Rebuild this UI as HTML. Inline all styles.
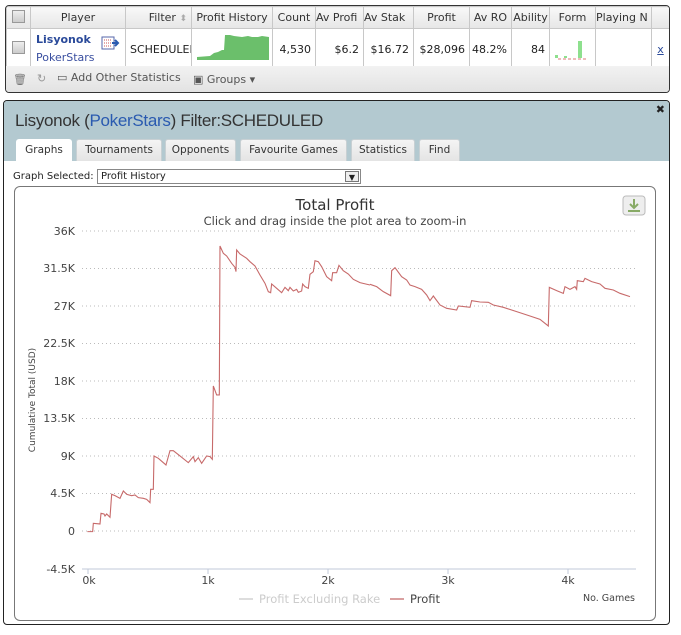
<!DOCTYPE html>
<html><head><style>
*{box-sizing:border-box;margin:0;padding:0}
body{width:681px;height:635px;background:#fff;font-family:"DejaVu Sans",Verdana,sans-serif;font-size:11px;color:#222;position:relative;overflow:hidden}
.abs{position:absolute}
#top{left:5px;top:5px;width:665px;height:88px;border:1px solid #333;border-radius:4px;overflow:hidden;background:#fff}
table{border-collapse:collapse;position:absolute;left:0;top:0;width:663px;table-layout:fixed}
td,th{border:1px solid #c8c8c8;font-weight:normal;white-space:nowrap;overflow:hidden;font-size:11px}
th{height:22px;background:linear-gradient(#f8f8f8,#e6e6e6);color:#333;text-align:center}
td{height:37px;text-align:right;padding-right:4px}
.cb{display:inline-block;width:13px;height:13px;border:1px solid #999;background:linear-gradient(#eee,#ccc)}
#foot{left:0;top:60px;width:663px;height:27px;background:linear-gradient(#f2f2f2,#e2e2e2);color:#555;font-size:11px}
#panel{left:3px;top:100px;width:667px;height:525px;border:1px solid #222;border-radius:4px;overflow:hidden;background:#fff}
#hdr{left:0;top:0;width:665px;height:60px;background:#b3c9d0}
.tab{position:absolute;top:38px;height:22px;border:1px solid #c8d0d3;border-bottom:none;border-radius:3px 3px 0 0;background:linear-gradient(#f4f4f4,#e4e4e4);font-size:10.5px;color:#333;text-align:center;line-height:21px}
#chart{left:10px;top:85px;width:642px;height:435px;border:1px solid #777;border-radius:6px}
</style></head><body>
<div id="top" class="abs">
<table>
<colgroup><col style="width:24px"><col style="width:95px"><col style="width:66px"><col style="width:81px"><col style="width:43px"><col style="width:48px"><col style="width:50px"><col style="width:56px"><col style="width:42px"><col style="width:38px"><col style="width:46px"><col style="width:56px"><col style="width:18px"></colgroup>
<tr><th><span class="cb"></span></th><th>Player</th><th style="text-align:right;padding-right:4px">Filter <span style="color:#aaa;font-size:9px">⬍</span></th><th>Profit History</th><th>Count</th><th style="text-align:left">Av Profi</th><th style="text-align:left">Av Stak</th><th>Profit</th><th>Av RO</th><th>Ability</th><th>Form</th><th style="text-align:left">Playing N</th><th></th></tr>
<tr><td style="text-align:center;padding:0"><span class="cb"></span></td>
<td style="text-align:left;padding-left:5px;position:relative"><div style="color:#2a4a9a;font-weight:bold;margin-top:-2px">Lisyonok</div><div style="color:#3a4fa0;margin-top:5px">PokerStars</div>
<svg style="position:absolute;left:70px;top:5px" width="20" height="18"><rect x="1" y="3" width="12" height="12" fill="#fff" stroke="#5566aa"/><path d="M3 6h8M3 9h8M3 12h8" stroke="#c55" stroke-dasharray="1 1"/><path d="M11 9h6M14 6l3 3-3 3" stroke="#2a5ab0" stroke-width="2" fill="none"/></svg></td>
<td style="text-align:left;padding-left:4px">SCHEDULED</td>
<td style="padding:0"><svg width="81" height="37"><path d="M5 28 L18 27 L22 24 L26 23 L30 21 L32 21 L33 6 L38 6 L42 7 L50 8 L56 7 L60 8 L66 8 L70 7 L77 8 L77 31 L5 31Z" fill="#6bbf6b"/></svg></td>
<td>4,530</td><td>$6.2</td><td>$16.72</td><td>$28,096</td><td>48.2%</td><td>84</td>
<td style="padding:0"><svg width="46" height="37"><rect x="5" y="26" width="3" height="3" fill="#8ee08e"/><rect x="28" y="12" width="4" height="17" fill="#8ee08e"/><rect x="14" y="27" width="3" height="2" fill="#8ee08e"/><path d="M8 30h30" stroke="#d77" stroke-dasharray="3 2"/></svg></td>
<td></td><td style="text-align:center;padding:0;color:#2a4a9a;text-decoration:underline">x</td></tr>
</table>
<div id="foot" class="abs"><span class="abs" style="left:7px;top:7px;color:#777">🗑</span><span class="abs" style="left:31px;top:6px;color:#999">↻</span><span class="abs" style="left:51px;top:5px">▭ Add Other Statistics</span><span class="abs" style="left:187px;top:7px">▣ Groups ▾</span></div>
</div>
<div id="panel" class="abs">
<div id="hdr" class="abs"><div class="abs" style="left:11px;top:10px;font-family:'Liberation Sans',Arial,sans-serif;font-size:17px;color:#333;letter-spacing:-0.3px">Lisyonok (<span style="color:#2a5ab0">PokerStars</span>) Filter:SCHEDULED</div>
<div class="abs" style="right:4px;top:2px;font-size:11px;font-weight:bold">✖</div>
<div class="tab" style="left:12px;width:56px;background:#fff;border-color:#fff;height:23px">Graphs</div>
<div class="tab" style="left:72px;width:86px">Tournaments</div>
<div class="tab" style="left:161px;width:71px">Opponents</div>
<div class="tab" style="left:236px;width:107px">Favourite Games</div>
<div class="tab" style="left:347px;width:64px">Statistics</div>
<div class="tab" style="left:415px;width:41px">Find</div></div>
<div class="abs" style="left:9px;top:70px;font-size:10px">Graph Selected:</div>
<div class="abs" style="left:93px;top:68px;width:264px;height:15px;border:1px solid #888;font-size:10px;padding-left:3px;line-height:13px">Profit History<span class="abs" style="right:1px;top:1px;width:14px;height:11px;border:1px solid #777;background:#eee;font-size:8px;text-align:center;line-height:11px">▼</span></div>
<div id="chart" class="abs"></div>
</div>
<svg class="abs" style="left:0;top:0" width="681" height="635">
<g font-family="'DejaVu Sans',sans-serif">
<text x="335" y="210" font-size="15" text-anchor="middle" fill="#333">Total Profit</text>
<text x="335" y="225" font-size="11.5" text-anchor="middle" fill="#444">Click and drag inside the plot area to zoom-in</text>
<rect x="623" y="196" width="22" height="19" rx="3" fill="#eee" stroke="#bbb"/><path d="M634 199v9M630 204l4 4 4-4M628 211h12" stroke="#8a6" stroke-width="2" fill="none"/>
<g stroke="#bbb" stroke-dasharray="1 3">
<path d="M82 231H636M82 268.5H636M82 306H636M82 343.5H636M82 381H636M82 418.5H636M82 456H636M82 493.5H636M82 531H636"/></g>
<path d="M82 569H636" stroke="#c0c8d8"/>
<g stroke="#c0c8d8"><path d="M88 569v5M208 569v5M328 569v5M448 569v5M568 569v5"/></g>
<g font-size="11" fill="#444" text-anchor="end">
<text x="75" y="235">36K</text><text x="75" y="272">31.5K</text><text x="75" y="310">27K</text><text x="75" y="347">22.5K</text><text x="75" y="385">18K</text><text x="75" y="422">13.5K</text><text x="75" y="460">9K</text><text x="75" y="497">4.5K</text><text x="75" y="535">0</text><text x="75" y="573">-4.5K</text></g>
<g font-size="11" fill="#444" text-anchor="middle"><text x="89" y="584">0k</text><text x="208" y="584">1k</text><text x="328" y="584">2k</text><text x="448" y="584">3k</text><text x="568" y="584">4k</text></g>
<text transform="translate(35,400) rotate(-90)" font-size="9" fill="#444" text-anchor="middle">Cumulative Total (USD)</text>
<path d="M239 599h14" stroke="#ddd" stroke-width="2"/><text x="259" y="603" font-size="11.5" fill="#ccc">Profit Excluding Rake</text>
<path d="M390 599h14" stroke="#d9a0a0" stroke-width="2"/><text x="410" y="603" font-size="11.5" fill="#444">Profit</text>
<text x="635" y="601" font-size="9.5" fill="#444" text-anchor="end">No. Games</text>
</g>
<g fill="none" stroke="#c76a6a" stroke-width="1.1">
<polyline vector-effect="non-scaling-stroke" transform="translate(80,230) scale(0.3333)" points="22,905 38,905 40,880 60,882 63,850 72,852 75,858 80,852 90,862 95,793 105,797 120,805 130,783 140,793 155,797 165,795 175,803 190,805 200,808 210,818 212,778 220,778 222,678 235,685 258,705 270,662 280,662 300,678 325,698 340,680 345,695 355,683 365,700 380,678 390,680 397,688 400,468 410,495 418,495 420,48 430,70 440,78 455,100 465,112 468,125 470,60 480,72 500,85 510,95 525,108 540,135 555,160 565,185 572,188 575,162 590,175 605,188 615,172 625,182 630,172 640,183 650,178 655,187 665,183 668,162 675,170 685,175 690,133 700,125 705,92 715,95 725,110 740,140 755,152 758,128 770,128 777,106 790,122 805,132 820,148 840,158 870,165"/>
<polyline vector-effect="non-scaling-stroke" transform="translate(370,230) scale(0.3333)" points="0,163 20,170 40,185 62,197 65,122 75,113 95,140 110,150 120,165 135,170 155,178 170,195 180,212 190,198 210,225 230,235 260,240 265,228 300,232 305,212 330,216 355,217 370,225 400,232 440,245 480,258 510,268 535,288 538,172 560,182 580,190 585,170 600,178 615,170 620,178 622,152 640,155 645,145 665,155 690,162 705,175 730,180 750,190 780,200"/>
</g>
</svg>
</body></html>
